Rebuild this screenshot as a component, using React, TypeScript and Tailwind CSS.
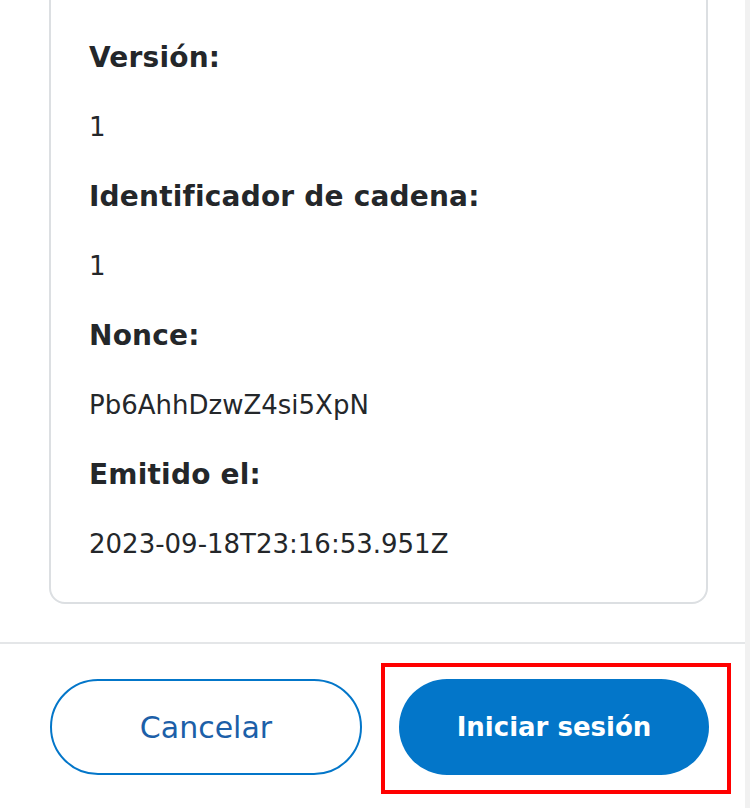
import React from "react";

type Field = { label: string; value: string };

const fields: Field[] = [
  { label: "URI:", value: "https://lp.io/j)," },
  { label: "Versión:", value: "1" },
  { label: "Identificador de cadena:", value: "1" },
  { label: "Nonce:", value: "Pb6AhhDzwZ4si5XpN" },
  { label: "Emitido el:", value: "2023-09-18T23:16:53.951Z" },
];

export default function App() {
  return (
    <div
      className="flex h-[808px] w-[750px] overflow-hidden bg-white text-[#24272a]"
      style={{ fontFamily: "'DejaVu Sans', 'Noto Sans', sans-serif" }}
    >
      <div className="flex w-[745px] flex-col">
        <div className="flex-1 overflow-hidden pl-[49px] pr-[37px]">
          <div className="-mt-[128px] rounded-b-[16px] border-2 border-[#dcdfe2] pb-[23px] pl-[38px] pt-[10px]">
            {fields.map((f, i) => (
              <div key={f.label}>
                <div className="flex h-[69.5px] items-center text-[28px] font-bold tracking-[0.2px]">{f.label}</div>
                <div
                  className={
                    i === 0
                      ? "flex h-[69.5px] items-start text-[26px] text-[#24272a]"
                      : "flex h-[69.5px] items-center text-[26px] text-[#24272a]"
                  }
                >
                  {f.value}
                </div>
              </div>
            ))}
          </div>
        </div>
        <div className="h-[2px] bg-[#e4e6e8]" />
        <div className="flex h-[164px] items-center gap-[37px] pl-[50px] pr-[36px] pt-[2px]">
          <button className="flex h-[96px] w-[312px] items-center justify-center rounded-full border-2 border-[#0376c9] text-[30px] text-[#1c5fa8]">
            Cancelar
          </button>
          <div className="-mb-[19px] -ml-[18px] -mr-[22px] -mt-[16px] border-4 border-[#ff0000] pb-[15px] pl-[14px] pr-[18px] pt-[12px]">
            <button className="flex h-[96px] w-[310px] items-center justify-center rounded-full bg-[#0376c9] text-[26px] font-bold text-white">
              Iniciar sesión
            </button>
          </div>
        </div>
      </div>
      <div className="w-[5px] bg-[#f1f1f1]" />
    </div>
  );
}
